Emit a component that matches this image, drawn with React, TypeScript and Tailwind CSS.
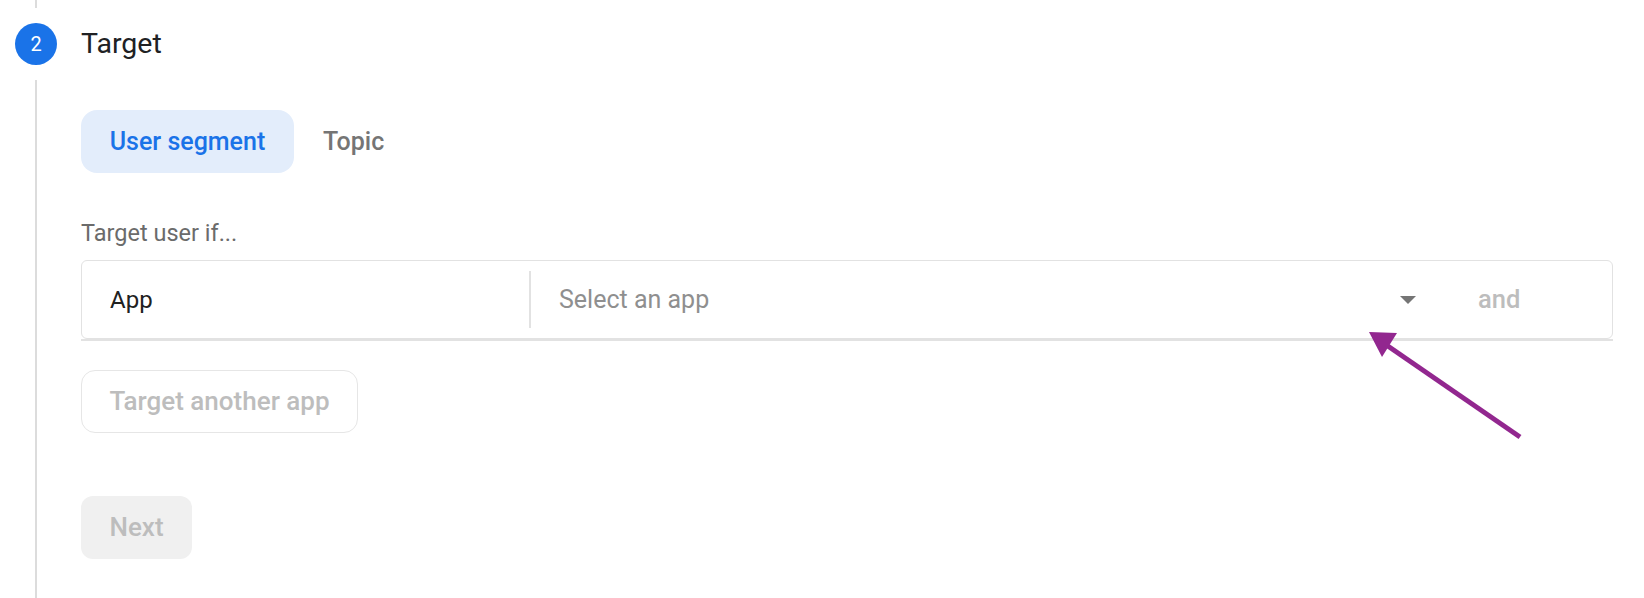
import React from "react";

export default function App() {
  return (
    <div className="relative w-full h-[598px] bg-white overflow-hidden" style={{ fontFamily: "Roboto, 'Noto Sans', sans-serif" }}>
      <div className="flex h-full">
        {/* rail */}
        <div className="w-[72px] flex flex-col items-center shrink-0 h-full">
          <div className="w-[2px] h-[8px] bg-[#dcdcdc]" />
          <div className="mt-[15px] w-[42px] h-[42px] rounded-full bg-[#1a73e8] flex items-center justify-center text-white text-[20px] leading-none">2</div>
          <div className="mt-[15px] w-[2px] flex-1 bg-[#dcdcdc]" />
        </div>
        {/* content */}
        <div className="flex-1 pl-[9px] pr-[31px]">
          <div className="h-[88px] flex items-center">
            <span className="text-[28.5px] text-[#202124] leading-none">Target</span>
          </div>
          <div className="mt-[22px] flex items-center gap-[29px]">
            <div className="h-[63px] w-[213px] rounded-[16px] bg-[#e3edfb] flex items-center justify-center text-[#1a73e8] text-[25px] font-medium">User segment</div>
            <div className="text-[25px] font-medium text-[#757575]">Topic</div>
          </div>
          <div className="mt-[46px] text-[23.5px] text-[#6b6b6b] leading-[28px]">Target user if...</div>
          <div className="mt-[13px] border-b-2 border-[#e2e2e2]">
            <div className="h-[79px] border border-[#e2e2e2] rounded-[6px] flex items-center">
              <div className="w-[447px] pl-[28px] text-[24px] text-[#212121]">App</div>
              <div className="w-[2px] h-[57px] bg-[#e2e2e2]" />
              <div className="flex-1 pl-[28px] text-[25px] text-[#8f8f8f]">Select an app</div>
              <svg width="16" height="8" viewBox="0 0 16 8" className="mr-[62px]">
                <path d="M0 0 L16 0 L8 8 Z" fill="#757575" />
              </svg>
              <div className="w-[134px] text-[25.5px] font-medium text-[#bdbdbd]">and</div>
            </div>
          </div>
          <div className="mt-[29px] h-[63px] w-[277px] rounded-[14px] border border-[#e6e6e6] flex items-center justify-center text-[26px] font-medium text-[#bdbdbd]">Target another app</div>
          <div className="mt-[63px] h-[63px] w-[111px] rounded-[12px] bg-[#f0f0f0] flex items-center justify-center text-[26px] font-medium text-[#bdbdbd]">Next</div>
        </div>
      </div>
      {/* annotation arrow */}
      <svg className="absolute left-0 top-0 pointer-events-none" width="1644" height="598" viewBox="0 0 1644 598">
        <line x1="1520" y1="437" x2="1382" y2="342" stroke="#92278f" strokeWidth="5" />
        <path d="M1369 332 L1397 333 L1382 357 Z" fill="#92278f" />
      </svg>
    </div>
  );
}
